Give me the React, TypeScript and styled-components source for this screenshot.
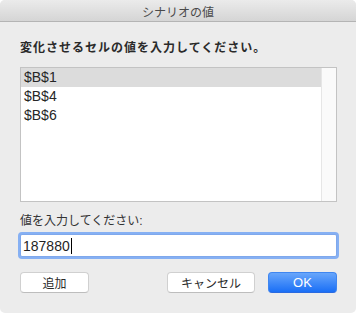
import styled, { createGlobalStyle } from "styled-components";

const GlobalStyle = createGlobalStyle`
  html, body {
    margin: 0;
    padding: 0;
    background: #ffffff;
  }
  body {
    font-family: "Liberation Sans", "Noto Sans CJK JP", sans-serif;
    -webkit-font-smoothing: antialiased;
  }
`;

const cells = ["$B$1", "$B$4", "$B$6"];

const App = () => {
  return (
    <>
      <GlobalStyle />
      <Window>
        <TitleBar>シナリオの値</TitleBar>
        <Body>
          <Prompt>変化させるセルの値を入力してください。</Prompt>
          <ListBox>
            <Rows>
              {cells.map((cell, i) => (
                <Row key={cell} selected={i === 0}>
                  {cell}
                </Row>
              ))}
            </Rows>
            <ScrollTrack />
          </ListBox>
          <FieldLabel>値を入力してください:</FieldLabel>
          <ValueField>
            187880
            <Caret />
          </ValueField>
          <Buttons>
            <Button>追加</Button>
            <Spacer />
            <CancelButton>キャンセル</CancelButton>
            <PrimaryButton>OK</PrimaryButton>
          </Buttons>
        </Body>
      </Window>
    </>
  );
};

export default App;

const Window = styled.div`
  width: 356px;
  height: 313px;
  background: #ececec;
  border-radius: 5px;
  overflow: hidden;
  display: flex;
  flex-direction: column;
`;

const TitleBar = styled.div`
  height: 22px;
  box-sizing: border-box;
  flex-shrink: 0;
  display: flex;
  align-items: center;
  justify-content: center;
  background: linear-gradient(#ebebeb, #d5d5d5);
  border-bottom: 1px solid #b4b4b4;
  font-size: 12px;
  color: #4a4a4a;
  padding-top: 1px;
`;

const Body = styled.div`
  padding: 17px 19px 0 20px;
  display: flex;
  flex-direction: column;
`;

const Prompt = styled.div`
  font-family: "Noto Sans CJK JP", sans-serif;
  font-size: 12px;
  line-height: 16px;
  font-weight: 700;
  letter-spacing: 1px;
  color: #2a2a2a;
`;

const ListBox = styled.div`
  margin-top: 12px;
  height: 135px;
  box-sizing: border-box;
  border: 1px solid #c3c3c3;
  background: #ffffff;
  display: flex;
`;

const Rows = styled.div`
  flex: 1;
  display: flex;
  flex-direction: column;
`;

const Row = styled.div<{ selected?: boolean }>`
  height: 19px;
  line-height: 19px;
  padding-left: 3px;
  font-size: 14px;
  color: #262626;
  background: ${(p) => (p.selected ? "#dcdcdc" : "transparent")};
`;

const ScrollTrack = styled.div`
  width: 14px;
  background: #fafafa;
  border-left: 1px solid #e6e6e6;
`;

const FieldLabel = styled.div`
  margin-top: 11px;
  font-size: 12px;
  line-height: 16px;
  color: #333333;
`;

const ValueField = styled.div`
  margin-top: 5px;
  height: 23px;
  box-sizing: border-box;
  border: 1px solid #7fa8ec;
  box-shadow: 0 0 0 2px #86b0f3;
  border-radius: 2px;
  background: #ffffff;
  display: flex;
  align-items: center;
  padding-left: 2px;
  font-size: 14px;
  color: #1f1f1f;
`;

const Caret = styled.span`
  display: inline-block;
  width: 1px;
  height: 16px;
  background: #000000;
  margin-left: 1px;
`;

const Buttons = styled.div`
  margin-top: 15px;
  display: flex;
  align-items: center;
`;

const Spacer = styled.div`
  flex: 1;
`;

const Button = styled.div`
  width: 69px;
  height: 21px;
  box-sizing: border-box;
  display: flex;
  align-items: center;
  justify-content: center;
  background: #ffffff;
  border: 1px solid #d0d0d0;
  border-bottom-color: #bdbdbd;
  border-radius: 4px;
  font-size: 12px;
  color: #2a2a2a;
`;

const CancelButton = styled(Button)`
  width: 88px;
  margin-right: 13px;
`;

const PrimaryButton = styled(Button)`
  width: 69px;
  background: linear-gradient(#68a6fb, #1a6ff6);
  border: 1px solid #3f86f0;
  border-bottom-color: #2a6ae0;
  color: #ffffff;
  font-size: 13px;
`;
